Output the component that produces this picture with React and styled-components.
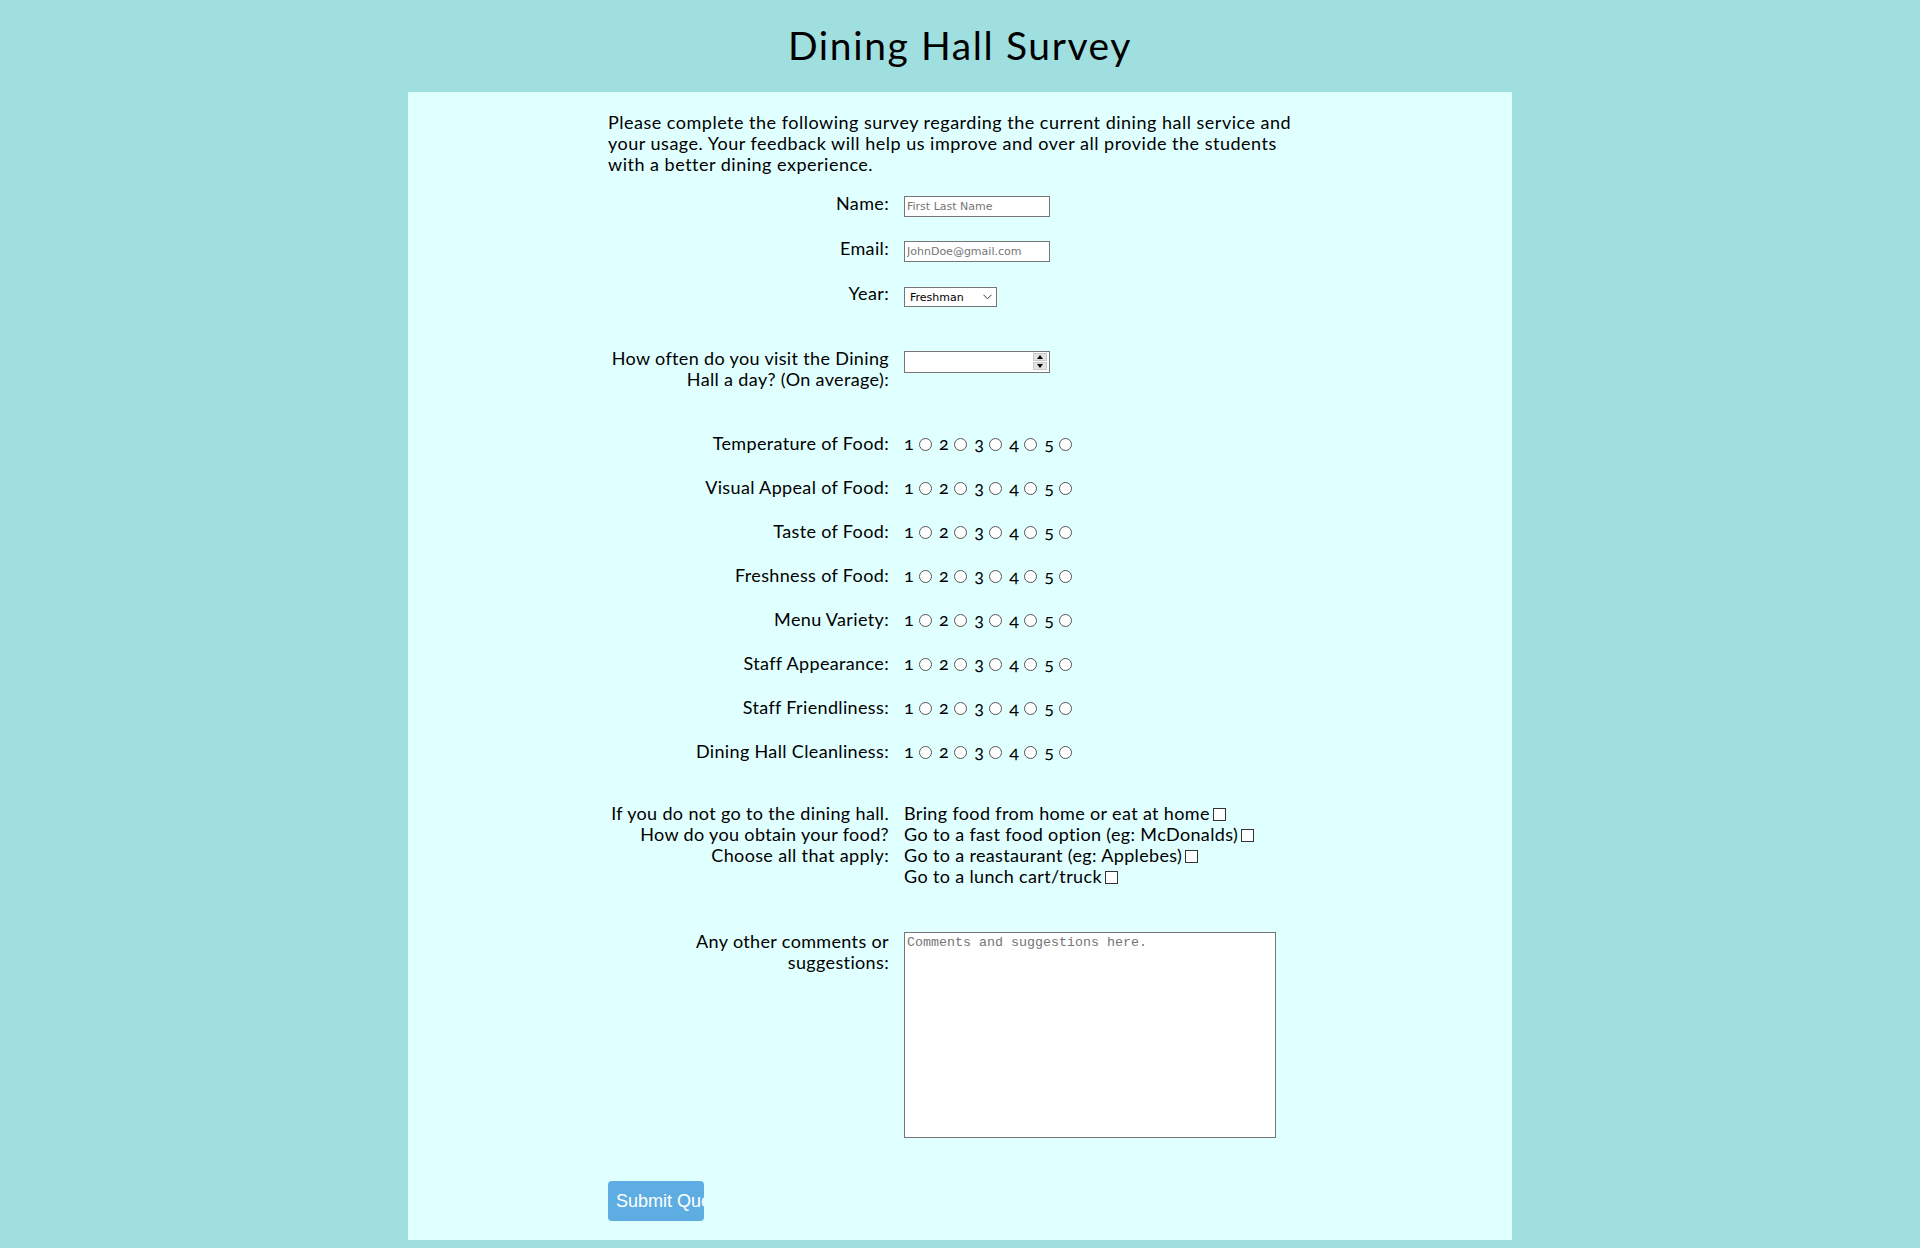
import React from "react";
import styled, { createGlobalStyle } from "styled-components";

const GlobalStyle = createGlobalStyle`
  body {
    margin: 0;
    background: #a0dfdf;
    font-family: Lato, "Open Sans", sans-serif;
    color: #000;
  }
`;

const Title = styled.h1`
  margin: 0 0 24px;
  padding-top: 22px;
  font-size: 39px;
  line-height: 46px;
  font-weight: 400;
  letter-spacing: 1.6px;
  text-align: center;
`;

const Panel = styled.main`
  width: 1104px;
  margin: 0 auto;
  background: #e0ffff;
  padding: 20px 0 19px;
`;

const Form = styled.form`
  width: 704px;
  margin: 0 auto;
  font-size: 18px;
  line-height: 21px;
  letter-spacing: 0.35px;
  font-variant-numeric: oldstyle-nums;
`;

const Intro = styled.p`
  margin: 0;
  letter-spacing: 0.5px;
`;

const Row = styled.div`
  display: grid;
  grid-template-columns: 281px 1fr;
  column-gap: 15px;
  align-items: start;
  margin-top: ${(p) => p.$gap}px;
`;

const Label = styled.label`
  display: flex;
  flex-direction: column;
  align-items: flex-end;
  white-space: nowrap;
`;

const Field = styled.div`
  display: flex;
  flex-direction: column;
  align-items: flex-start;
`;

const TextInput = styled.input`
  display: block;
  box-sizing: border-box;
  width: 146px;
  height: 21px;
  margin: 3px 0 0;
  padding: 1px 2px;
  border: 1px solid #767676;
  background: #fff;
  letter-spacing: 0;
  font: 11px "DejaVu Sans", sans-serif;

  &::placeholder {
    color: #757575;
  }
`;

const SelectWrap = styled.div`
  position: relative;
  margin-top: 4px;
`;

const Select = styled.select`
  display: block;
  box-sizing: border-box;
  width: 93px;
  height: 20px;
  margin: 0;
  padding: 0 18px 0 5px;
  border: 1px solid #767676;
  border-radius: 0;
  background: #fff;
  color: #000;
  letter-spacing: 0;
  font: 11px "DejaVu Sans", sans-serif;
  appearance: none;
`;

const Chevron = styled.svg`
  position: absolute;
  right: 5px;
  top: 7px;
  width: 9px;
  height: 6px;
  pointer-events: none;
`;

const NumberWrap = styled.div`
  position: relative;
  width: 146px;
  margin-top: 3px;
`;

const NumberInput = styled(TextInput)`
  margin: 0;
  height: 22px;

  &::-webkit-inner-spin-button,
  &::-webkit-outer-spin-button {
    -webkit-appearance: none;
    margin: 0;
  }
`;

const Spinner = styled.span`
  position: absolute;
  right: 3px;
  top: 2px;
  width: 14px;
  height: 17px;
  display: flex;
  flex-direction: column;
  gap: 1px;
  pointer-events: none;
`;

const SpinHalf = styled.span`
  flex: 1;
  display: flex;
  align-items: center;
  justify-content: center;
  background: #e3e3e3;
  border: 1px solid #c9c9c9;

  &::after {
    content: "";
    border-left: 3px solid transparent;
    border-right: 3px solid transparent;
    ${(p) =>
      p.$down
        ? "border-top: 4px solid #000;"
        : "border-bottom: 4px solid #000;"}
  }
`;

const Scale = styled.div`
  white-space: nowrap;
`;

const Choice = styled.label`
  margin-right: 4px;
`;

const Radio = styled.input`
  appearance: none;
  box-sizing: border-box;
  width: 13px;
  height: 13px;
  margin: 0 3px 0 5px;
  border: 1px solid #555;
  border-radius: 50%;
  background: #fff;
  vertical-align: -1px;

  &:checked {
    background: radial-gradient(#222 0 3px, #fff 3.5px);
  }
`;

const Option = styled.label`
  display: block;
`;

const Check = styled.input`
  appearance: none;
  box-sizing: border-box;
  width: 13px;
  height: 13px;
  margin: 0 0 0 3px;
  border: 1px solid #333;
  background: #fff;
  vertical-align: -1px;

  &:checked {
    background: #222;
  }
`;

const Comments = styled.textarea`
  display: block;
  box-sizing: border-box;
  width: 372px;
  height: 206px;
  margin: 1px 0 0;
  padding: 2px;
  border: 1px solid #767676;
  background: #fff;
  resize: none;
  letter-spacing: 0;
  font: 13.33px "Liberation Mono", monospace;

  &::placeholder {
    color: #757575;
  }
`;

const Submit = styled.button`
  display: block;
  width: 96px;
  height: 40px;
  margin-top: 43px;
  padding: 0 8px;
  border: none;
  border-radius: 4px;
  background: #5dade2;
  color: #fff;
  font: 18px "Liberation Sans", Arial, sans-serif;
  text-align: left;
  white-space: nowrap;
  overflow: hidden;
`;

const ratings = [
  "Temperature of Food",
  "Visual Appeal of Food",
  "Taste of Food",
  "Freshness of Food",
  "Menu Variety",
  "Staff Appearance",
  "Staff Friendliness",
  "Dining Hall Cleanliness",
];

const options = [
  "Bring food from home or eat at home",
  "Go to a fast food option (eg: McDonalds)",
  "Go to a reastaurant (eg: Applebes)",
  "Go to a lunch cart/truck",
];

function FieldLabel({ lines, htmlFor }) {
  return (
    <Label htmlFor={htmlFor}>
      {lines.map((l) => (
        <span key={l}>{l}</span>
      ))}
    </Label>
  );
}

function RatingRow({ label, name, gap }) {
  return (
    <Row $gap={gap}>
      <FieldLabel lines={[label + ":"]} />
      <Scale>
        {[1, 2, 3, 4, 5].map((n) => (
          <Choice key={n}>
            {n}
            <Radio type="radio" name={name} value={n} />
          </Choice>
        ))}
      </Scale>
    </Row>
  );
}

export default function App() {
  return (
    <>
      <GlobalStyle />
      <Title>Dining Hall Survey</Title>
      <Panel>
        <Form onSubmit={(e) => e.preventDefault()}>
          <Intro>
            Please complete the following survey regarding the current dining
            hall service and your usage. Your feedback will help us improve and
            over all provide the students with a better dining experience.
          </Intro>

          <Row $gap={18}>
            <FieldLabel htmlFor="name" lines={["Name:"]} />
            <Field>
              <TextInput id="name" type="text" placeholder="First Last Name" />
            </Field>
          </Row>

          <Row $gap={21}>
            <FieldLabel htmlFor="email" lines={["Email:"]} />
            <Field>
              <TextInput id="email" type="email" placeholder="JohnDoe@gmail.com" />
            </Field>
          </Row>

          <Row $gap={21}>
            <FieldLabel htmlFor="year" lines={["Year:"]} />
            <Field>
              <SelectWrap>
                <Select id="year" defaultValue="Freshman">
                  <option>Freshman</option>
                  <option>Sophomore</option>
                  <option>Junior</option>
                  <option>Senior</option>
                </Select>
                <Chevron viewBox="0 0 9 6">
                  <path d="M0.5 0.8 L4.5 4.8 L8.5 0.8" fill="none" stroke="#333" strokeWidth="1" />
                </Chevron>
              </SelectWrap>
            </Field>
          </Row>

          <Row $gap={41}>
            <FieldLabel
              htmlFor="visits"
              lines={["How often do you visit the Dining", "Hall a day? (On average):"]}
            />
            <Field>
              <NumberWrap>
                <NumberInput id="visits" type="number" min="0" />
                <Spinner>
                  <SpinHalf />
                  <SpinHalf $down />
                </Spinner>
              </NumberWrap>
            </Field>
          </Row>

          {ratings.map((r, i) => (
            <RatingRow key={r} label={r} name={"rate" + i} gap={i === 0 ? 43 : 23} />
          ))}

          <Row $gap={41}>
            <FieldLabel
              lines={[
                "If you do not go to the dining hall.",
                "How do you obtain your food?",
                "Choose all that apply:",
              ]}
            />
            <Field>
              {options.map((o) => (
                <Option key={o}>
                  {o}
                  <Check type="checkbox" />
                </Option>
              ))}
            </Field>
          </Row>

          <Row $gap={44}>
            <FieldLabel htmlFor="comments" lines={["Any other comments or", "suggestions:"]} />
            <Field>
              <Comments id="comments" placeholder="Comments and suggestions here." />
            </Field>
          </Row>

          <Submit type="submit">Submit Query</Submit>
        </Form>
      </Panel>
    </>
  );
}
